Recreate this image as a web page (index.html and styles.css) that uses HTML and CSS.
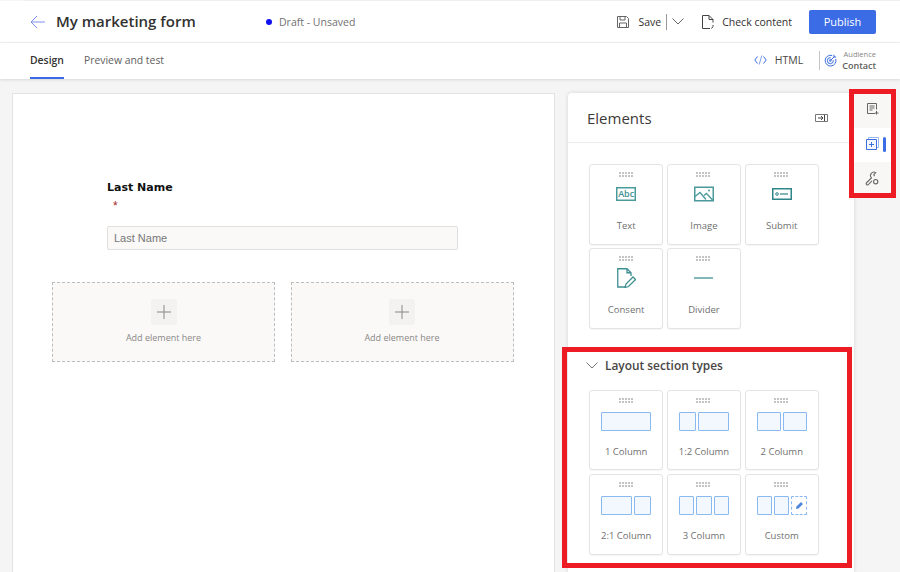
FILE: index.html
```html
<!DOCTYPE html>
<html lang="en">
<head>
    <meta charset="UTF-8">
    <meta name="viewport" content="width=device-width, initial-scale=1.0">
    <title>My marketing form</title>
    <link rel="stylesheet" href="styles.css">
</head>
<body>
    <div id="app">
        <div class="top-line"></div>
        <header class="topbar">
            <svg class="back" width="16" height="14" viewBox="0 0 16 14"><path d="M7 1 1 7l6 6M1 7h14" fill="none" stroke="#7f8ff0" stroke-width="1"/></svg>
            <h1 class="title">My marketing form</h1>
            <div class="status"><span class="status-dot"></span>Draft - Unsaved</div>
            <div class="actions">
                <svg class="save-icon" width="12" height="12" viewBox="0 0 12 12"><path d="M.5.5h9l2 2v9H.5z M3 .5v3.5h5V.5 M2.5 11.500V7h7v4.500" fill="none" stroke="#666" stroke-width="1"/></svg>
                <span class="save-label">Save</span>
                <span class="save-split"></span>
                <svg class="save-caret" width="12" height="7" viewBox="0 0 12 7"><path d="M.5.5 6 6 11.500.5" fill="none" stroke="#666" stroke-width="1"/></svg>
                <svg class="check-icon" width="12" height="14" viewBox="0 0 12 14"><path d="M8 13.500H.5V.5H7l4 4v3M7 .5v4h4M11 10v1.500L9.500 13.500" fill="none" stroke="#444" stroke-width="1"/></svg>
                <span class="check-label">Check content</span>
                <button class="publish">Publish</button>
            </div>
        </header>
        <nav class="tabs">
            <a class="tab active">Design</a>
            <a class="tab">Preview and test</a>
            <div class="tabs-right">
                <svg width="13" height="10" viewBox="0 0 13 10"><path d="M3.500 1.500 .8 5l2.700 3.500M9.500 1.500 12.200 5 9.500 8.500" fill="none" stroke="#3b6fe0" stroke-width="1"/><path d="M7.800 .5 5.200 9.500" fill="none" stroke="#7ea0ea" stroke-width="1"/></svg>
                <span class="html-label">HTML</span>
                <span class="tabs-split"></span>
                <svg width="13" height="13" viewBox="0 0 13 13"><g fill="none" stroke="#3b6fe0" stroke-width="1"><path d="M11.700 5a5.400 5.400 0 1 1-3.500-3.500"/><path d="M9.300 6.200a3 3 0 1 1-2.500-2.500"/><circle cx="6.300" cy="6.500" r=".9"/><path d="M6.500 6.500 10.500 2.500M10 .8v2.200h2.200"/></g></svg>
                <div class="audience">
                    <span class="audience-label">Audience</span>
                    <span class="audience-value">Contact</span>
                </div>
            </div>
        </nav>

        <main class="workspace">
            <section class="canvas">
                <div class="field">
                    <label class="field-label">Last Name</label>
                    <span class="required">*</span>
                    <div class="field-input">Last Name</div>
                </div>
                <div class="drop-row">
                    <div class="drop">
                        <span class="drop-plus"><svg width="14" height="14" viewBox="0 0 14 14"><path d="M7 0v14M0 7h14" stroke="#8a8886" stroke-width="1"/></svg></span>
                        <span class="drop-text">Add element here</span>
                    </div>
                    <div class="drop">
                        <span class="drop-plus"><svg width="14" height="14" viewBox="0 0 14 14"><path d="M7 0v14M0 7h14" stroke="#8a8886" stroke-width="1"/></svg></span>
                        <span class="drop-text">Add element here</span>
                    </div>
                </div>
            </section>

            <aside class="panel">
                <div class="panel-head">
                    <h2>Elements</h2>
                    <svg width="13" height="8" viewBox="0 0 13 8"><path d="M.5.5h12v7H.5z" fill="none" stroke="#777"/><path d="M3 4h5M6 2l2 2-2 2M9.500 1v6" fill="none" stroke="#444"/></svg>
                </div>
                <div class="tile-grid elements">
                    <div class="tile">
                        <span class="grip"></span>
                        <svg class="tile-icon" width="20" height="14" viewBox="0 0 20 14"><rect x=".75" y=".75" width="18.500" height="12.500" fill="#fff" stroke="#4a9a9c" stroke-width="1.500"/></svg>
                        <span class="abc">Abc</span>
                        <span class="tile-label">Text</span>
                    </div>
                    <div class="tile">
                        <span class="grip"></span>
                        <svg class="tile-icon" width="20" height="15" viewBox="0 0 20 15"><path d="M.75.75h18.500v13.500H.75z" fill="none" stroke="#4a9a9c" stroke-width="1.500"/><path d="M1 10l5-4 6 7M10 9l2.500-2 6.500 7" fill="none" stroke="#4a9a9c" stroke-width="1.300"/><circle cx="15" cy="4" r="1" fill="#4a9a9c"/></svg>
                        <span class="tile-label">Image</span>
                    </div>
                    <div class="tile">
                        <span class="grip"></span>
                        <svg class="tile-icon" width="20" height="12" viewBox="0 0 20 12"><path d="M.75.75h18.500v10.500H.75z" fill="none" stroke="#2f8588" stroke-width="1.500"/><circle cx="5" cy="6" r="1.300" fill="none" stroke="#2f8588"/><path d="M8 6h8" stroke="#2f8588" stroke-width="1.200"/></svg>
                        <span class="tile-label">Submit</span>
                    </div>
                    <div class="tile">
                        <span class="grip"></span>
                        <svg class="tile-icon" width="19" height="20" viewBox="0 0 19 20"><path d="M8 19H.75V.75H10l4 4V8M10 .75v4h4" fill="none" stroke="#3f9093" stroke-width="1.300"/><path d="M8 19.500l1-3.500 7-7 2.500 2.500-7 7z" fill="none" stroke="#3f9093" stroke-width="1.300"/></svg>
                        <span class="tile-label">Consent</span>
                    </div>
                    <div class="tile">
                        <span class="grip"></span>
                        <svg class="tile-icon" width="19" height="20" viewBox="0 0 19 20"><path d="M0 10h19" stroke="#2f8588" stroke-width="1.200"/></svg>
                        <span class="tile-label">Divider</span>
                    </div>
                </div>
                <div class="section-head">
                    <svg width="12" height="7" viewBox="0 0 12 7"><path d="M.5.5 6 6 11.500.5" fill="none" stroke="#777" stroke-width="1"/></svg>
                    <span>Layout section types</span>
                </div>
                <div class="tile-grid layouts">
                    <div class="tile">
                        <span class="grip"></span>
                        <div class="thumb"><i class="col"></i></div>
                        <span class="tile-label">1 Column</span>
                    </div>
                    <div class="tile">
                        <span class="grip"></span>
                        <div class="thumb"><i class="col"></i><i class="col wide"></i></div>
                        <span class="tile-label">1:2 Column</span>
                    </div>
                    <div class="tile">
                        <span class="grip"></span>
                        <div class="thumb"><i class="col"></i><i class="col"></i></div>
                        <span class="tile-label">2 Column</span>
                    </div>
                    <div class="tile">
                        <span class="grip"></span>
                        <div class="thumb"><i class="col wide"></i><i class="col"></i></div>
                        <span class="tile-label">2:1 Column</span>
                    </div>
                    <div class="tile">
                        <span class="grip"></span>
                        <div class="thumb"><i class="col"></i><i class="col"></i><i class="col"></i></div>
                        <span class="tile-label">3 Column</span>
                    </div>
                    <div class="tile">
                        <span class="grip"></span>
                        <div class="thumb">
                            <i class="col"></i><i class="col"></i>
                            <i class="col dashed"><svg width="9" height="9" viewBox="0 0 9 9"><path d="M1 8l.5-2.500L6 1l2 2-4.500 4.500z" fill="#4f86dc"/></svg></i>
                        </div>
                        <span class="tile-label">Custom</span>
                    </div>
                </div>
            </aside>

            <div class="rail">
                <div class="rail-item first">
                    <svg width="12" height="12" viewBox="0 0 12 12"><path d="M8 10.500H.5V.5h9v6" fill="none" stroke="#666"/><path d="M2.500 3h5M2.500 5h5M2.500 7h3M9.500 8v3.500M8 10h3.500" fill="none" stroke="#666"/></svg>
                </div>
                <div class="rail-item current">
                    <svg width="13" height="13" viewBox="0 0 13 13"><path d="M2.500 2.500v-2h10v10h-2" fill="none" stroke="#9db8f0"/><path d="M.5 2.500h10v10H.5z" fill="#f3f7fe" stroke="#3b6fe0"/><path d="M5.500 5v5M3 7.500h5" stroke="#3b6fe0"/></svg>
                    <span class="rail-mark"></span>
                </div>
                <div class="rail-item">
                    <svg width="15" height="15" viewBox="0 0 14 14"><path d="M1.200 11.200 6 6.400a3.200 3.200 0 0 1 4-4.900L8.200 3.300l.6 1.600M1.200 11.200a1.300 1.300 0 0 0 1.700 1.700L6.500 9.300" fill="none" stroke="#666"/><circle cx="10" cy="10" r="2" fill="none" stroke="#666"/></svg>
                </div>
            </div>
        </main>

        <div class="callout callout-rail"></div>
        <div class="callout callout-layouts"></div>
    </div>
</body>
</html>
```

FILE: styles.css
```css
body {
    font-family: "Open Sans", Arial, sans-serif;
    background-color: #f5f5f5;
    color: #323130;
    margin: 0;
}

#app {
    position: relative;
    width: 900px;
    height: 572px;
    overflow: hidden;
}

.top-line {
    height: 1px;
    margin-left: 24px;
    background: #eeeeee;
}

.topbar {
    display: flex;
    align-items: center;
    height: 41px;
    padding: 0 24px 0 30px;
    background: #fff;
    border-bottom: 1px solid #f0f0f0;
}

.back {
    margin-right: 10px;
}

.title {
    margin: 0 0 2px;
    font-size: 15px;
    font-weight: 600;
    width: 210px;
    white-space: nowrap;
}

.status {
    display: flex;
    align-items: center;
    font-size: 10.500px;
    color: #707070;
}

.status-dot {
    width: 6px;
    height: 6px;
    border-radius: 50%;
    background: #1010f0;
    margin-right: 7px;
}

.actions {
    display: flex;
    align-items: center;
    margin-left: auto;
    font-size: 10.500px;
}

.save-label {
    margin-left: 9px;
}

.save-split {
    width: 1px;
    height: 16px;
    background: #999;
    margin: 0 5px;
}

.check-icon {
    margin-left: 18px;
}

.check-label {
    margin-left: 8px;
}

.publish {
    width: 67px;
    height: 24px;
    margin-left: 17px;
    border: none;
    border-radius: 2px;
    background: #3b6ce6;
    color: #fff;
    font-family: inherit;
    font-size: 11px;
}

.tabs {
    position: relative;
    display: flex;
    align-items: stretch;
    height: 36px;
    padding: 0 24px 0 30px;
    background: #fff;
    box-shadow: 0 1px 3px rgba(0, 0, 0, 0.12);
}

.tab {
    display: flex;
    align-items: center;
    height: 33px;
    margin-right: 20px;
    font-size: 10.400px;
    color: #616161;
}

.tab.active {
    color: #323130;
    font-weight: 600;
    border-bottom: 2px solid #3b6ce6;
    height: 34px;
}

.tabs-right {
    display: flex;
    align-items: center;
    margin-left: auto;
    height: 34px;
}

.html-label {
    margin-left: 8px;
    font-size: 10.500px;
    color: #484644;
}

.tabs-split {
    width: 1px;
    height: 19px;
    background: #c8c6c4;
    margin: 0 4px 0 16px;
}

.audience {
    display: flex;
    flex-direction: column;
    align-items: flex-end;
    margin-left: 5px;
    line-height: 11px;
}

.audience-label {
    font-size: 7.500px;
    color: #8a8886;
}

.audience-value {
    font-size: 9px;
    font-weight: 600;
    color: #605e5c;
}

.workspace {
    display: flex;
    align-items: flex-start;
    padding: 14px 0 0 12px;
}

.canvas {
    box-sizing: border-box;
    width: 543px;
    height: 480px;
    padding: 87px 39px 0;
    background: #fff;
    border: 1px solid #e3e3e3;
}

.field {
    display: flex;
    flex-direction: column;
    margin: 0 57px 0 55px;
}

.field-label {
    font-family: "DejaVu Sans", Verdana, sans-serif;
    font-size: 11px;
    font-weight: 700;
    color: #111;
    line-height: 14px;
}

.required {
    margin: 4px 0 0 6px;
    font-family: "Liberation Sans", Arial, sans-serif;
    font-size: 12px;
    line-height: 14px;
    color: #a4262c;
}

.field-input {
    box-sizing: border-box;
    height: 24px;
    margin-top: 13px;
    padding: 0 6px;
    background: #faf9f8;
    border: 1px solid #e1dfdd;
    border-radius: 2px;
    font-family: "Liberation Sans", Arial, sans-serif;
    font-size: 11px;
    line-height: 22px;
    color: #777;
}

.drop-row {
    display: flex;
    gap: 15.500px;
    margin-top: 32px;
}

.drop {
    box-sizing: border-box;
    display: flex;
    flex-direction: column;
    align-items: center;
    width: 223px;
    height: 80px;
    padding-top: 16px;
    background: #faf9f8;
    border: 1px dashed #bdbdbd;
}

.drop-plus {
    display: flex;
    align-items: center;
    justify-content: center;
    width: 26px;
    height: 26px;
    background: #f3f2f1;
    border-radius: 2px;
}

.drop-text {
    margin-top: 6px;
    font-size: 9px;
    line-height: 14px;
    color: #8a8886;
}

.panel {
    box-sizing: border-box;
    width: 286px;
    height: 480px;
    margin-left: 13px;
    background: #fff;
    border-radius: 4px 0 0 0;
    box-shadow: 0 0 4px rgba(0, 0, 0, 0.14);
}

.panel-head {
    display: flex;
    align-items: center;
    justify-content: space-between;
    box-sizing: border-box;
    height: 50px;
    padding: 0 26px 0 19px;
    border-bottom: 1px solid #ebebeb;
}

.panel-head h2 {
    margin: 0;
    font-size: 15px;
    font-weight: 500;
    color: #3b3a39;
}

.tile-grid {
    display: grid;
    grid-template-columns: repeat(3, 74.300px);
    grid-auto-rows: 80.500px;
    gap: 4px 3.500px;
    padding-left: 21px;
}

.elements {
    grid-auto-rows: 81px;
    gap: 3px 3.500px;
    padding-top: 21px;
    height: 165px;
}

.tile {
    position: relative;
    display: flex;
    flex-direction: column;
    align-items: center;
    box-sizing: border-box;
    padding-top: 7px;
    background: #fff;
    border: 1px solid #e4e4e4;
    border-radius: 3px;
    box-shadow: 0 1px 1px rgba(0, 0, 0, 0.04);
}

.grip {
    width: 15px;
    height: 5px;
    background:
        repeating-linear-gradient(180deg, transparent 0 2px, #fff 2px 3px),
        repeating-linear-gradient(90deg, #c4c4c4 0 2px, #fff 2px 3px);
}

.tile-icon {
    height: 20px;
    margin-top: 7px;
}

.abc {
    position: absolute;
    top: 23px;
    left: 0;
    right: 0;
    text-align: center;
    font-size: 9px;
    font-weight: 600;
    line-height: 12px;
    color: #3f8f92;
}

.tile-label {
    position: absolute;
    top: 54px;
    left: 0;
    right: 0;
    text-align: center;
    font-size: 9.500px;
    line-height: 14px;
    color: #707070;
}

.section-head {
    display: flex;
    align-items: center;
    gap: 7px;
    height: 20px;
    margin-top: 26px;
    padding-left: 18px;
    font-size: 11.900px;
    font-weight: 600;
    color: #484644;
}

.layouts {
    padding-top: 14.500px;
}

.thumb {
    display: flex;
    gap: 2px;
    width: 50px;
    height: 19px;
    margin-top: 9px;
}

.col {
    flex: 1;
    display: flex;
    align-items: center;
    justify-content: center;
    background: #f3f8fe;
    border: 1px solid #8ab8f0;
    border-radius: 1px;
}

.col.wide {
    flex: 2;
}

.col.dashed {
    border-style: dashed;
    background: #fff;
}

.rail {
    width: 37px;
    margin-top: 1px;
    background: #f8f7f6;
    border-right: 1px solid #e6e6e6;
}

.rail-item {
    position: relative;
    display: flex;
    align-items: center;
    justify-content: center;
    height: 32px;
}

.rail-item.first {
    box-sizing: border-box;
    height: 34px;
    padding-bottom: 5px;
}

.rail-item.current {
    box-sizing: border-box;
    height: 34px;
    padding-bottom: 3px;
    background: #fff;
}

.rail-mark {
    position: absolute;
    top: 9px;
    right: 5px;
    width: 3px;
    height: 15px;
    border-radius: 2px;
    background: #3b6ce6;
}

.callout {
    position: absolute;
    box-sizing: border-box;
    border: 5px solid #ed1c24;
}

.callout-rail {
    left: 849px;
    top: 89px;
    width: 47px;
    height: 109px;
}

.callout-layouts {
    left: 562px;
    top: 347px;
    width: 290px;
    height: 221px;
}
```
